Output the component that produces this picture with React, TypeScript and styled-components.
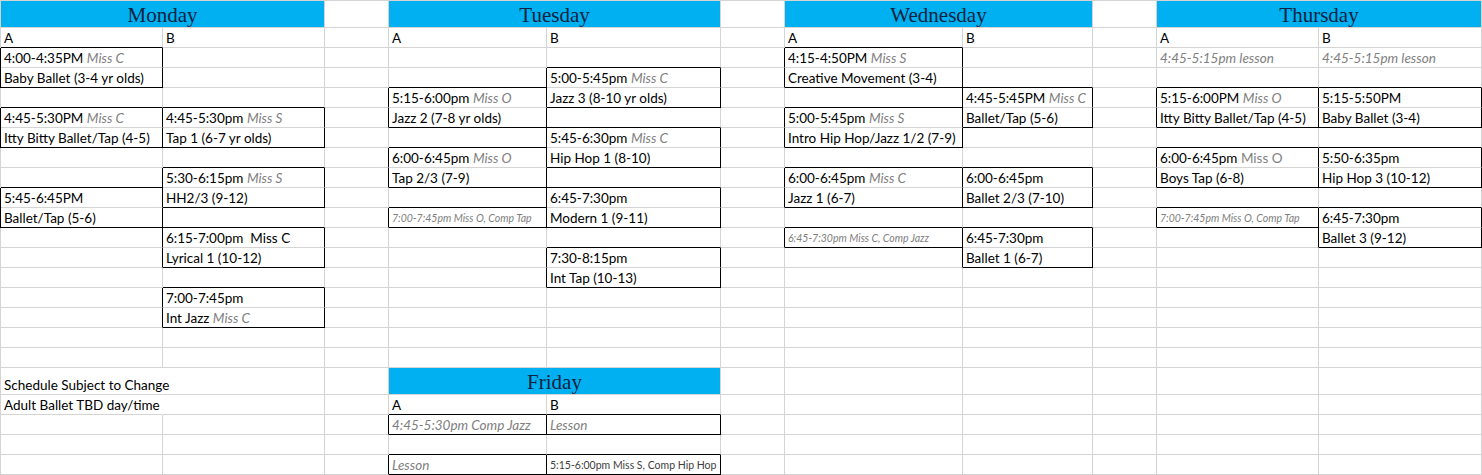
import React from 'react';
import styled, { createGlobalStyle } from 'styled-components';

const GRID = '#d4d4d4';
const INK = '#000';

const GlobalStyle = createGlobalStyle`
  *, *::before, *::after { box-sizing: border-box; }
  body {
    margin: 0;
    background: #fff;
    overflow: hidden;
  }
`;

const Sheet = styled.div`
  display: grid;
  grid-template-columns: 162px 162px 64px 158px 174px 64px 178px 130px 64px 162px 163px;
  grid-template-rows: 27px repeat(17, 20px) 27px repeat(4, 20px);
  width: 1482px;
  border-top: 1px solid ${GRID};
  border-left: 1px solid ${GRID};
  font-family: Lato, 'Liberation Sans', sans-serif;
  font-size: 13.5px;
  color: #000;
`;

const Cell = styled.div<{ $bottom?: boolean; $right?: boolean; $left?: boolean; $flow?: boolean }>`
  display: flex;
  align-items: flex-end;
  padding: 0 2px 0 3px;
  line-height: 17px;
  white-space: pre;
  min-width: 0;
  border-right: 1px solid ${({ $right, $flow }) => ($right ? INK : $flow ? 'transparent' : GRID)};
  border-bottom: 1px solid ${({ $bottom }) => ($bottom ? INK : GRID)};
  box-shadow: ${({ $left }) => ($left ? `-1px 0 0 ${INK}` : 'none')};
`;

const DayTitle = styled.div`
  grid-column: span 2;
  display: flex;
  align-items: flex-end;
  justify-content: center;
  background: #00b0f0;
  border-right: 1px solid ${GRID};
  border-bottom: 1px solid ${GRID};
  font-family: 'Liberation Serif', serif;
  font-size: 21px;
  line-height: 24px;
  color: #0c2240;
`;

const Teacher = styled.span<{ $plain?: boolean }>`
  color: #808080;
  font-style: ${({ $plain }) => ($plain ? 'normal' : 'italic')};
`;

const Lesson = styled.span`
  color: #808080;
  font-style: italic;
`;

const Note = styled.span<{ $plain?: boolean }>`
  font-size: 10.5px;
  color: ${({ $plain }) => ($plain ? '#404040' : '#808080')};
  font-style: ${({ $plain }) => ($plain ? 'normal' : 'italic')};
`;

const slot = (time: string, who: string) => (
  <>
    {time} <Teacher>{who}</Teacher>
  </>
);

const content: Record<string, React.ReactNode> = {
  // Monday
  '1,0': 'A',
  '1,1': 'B',
  '2,0': slot('4:00-4:35PM', 'Miss C'),
  '3,0': 'Baby Ballet (3-4 yr olds)',
  '5,0': slot('4:45-5:30PM', 'Miss C'),
  '5,1': slot('4:45-5:30pm', 'Miss S'),
  '6,0': 'Itty Bitty Ballet/Tap (4-5)',
  '6,1': 'Tap 1 (6-7 yr olds)',
  '8,1': slot('5:30-6:15pm', 'Miss S'),
  '9,0': '5:45-6:45PM',
  '9,1': 'HH2/3 (9-12)',
  '10,0': 'Ballet/Tap (5-6)',
  '11,1': '6:15-7:00pm  Miss C',
  '12,1': 'Lyrical 1 (10-12)',
  '14,1': '7:00-7:45pm',
  '15,1': (
    <>
      Int Jazz <Teacher>Miss C</Teacher>
    </>
  ),
  '18,0': 'Schedule Subject to Change',
  '19,0': 'Adult Ballet TBD day/time',
  // Tuesday
  '1,3': 'A',
  '1,4': 'B',
  '3,4': slot('5:00-5:45pm', 'Miss C'),
  '4,3': slot('5:15-6:00pm', 'Miss O'),
  '4,4': 'Jazz 3 (8-10 yr olds)',
  '5,3': 'Jazz 2 (7-8 yr olds)',
  '6,4': slot('5:45-6:30pm', 'Miss C'),
  '7,3': slot('6:00-6:45pm', 'Miss O'),
  '7,4': 'Hip Hop 1 (8-10)',
  '8,3': 'Tap 2/3 (7-9)',
  '9,4': '6:45-7:30pm',
  '10,3': <Note>7:00-7:45pm Miss O, Comp Tap</Note>,
  '10,4': 'Modern 1 (9-11)',
  '12,4': '7:30-8:15pm',
  '13,4': 'Int Tap (10-13)',
  // Wednesday
  '1,6': 'A',
  '1,7': 'B',
  '2,6': slot('4:15-4:50PM', 'Miss S'),
  '3,6': 'Creative Movement (3-4)',
  '4,7': slot('4:45-5:45PM', 'Miss C'),
  '5,6': slot('5:00-5:45pm', 'Miss S'),
  '5,7': 'Ballet/Tap (5-6)',
  '6,6': 'Intro Hip Hop/Jazz 1/2 (7-9)',
  '8,6': slot('6:00-6:45pm', 'Miss C'),
  '8,7': '6:00-6:45pm',
  '9,6': 'Jazz 1 (6-7)',
  '9,7': 'Ballet 2/3 (7-10)',
  '11,6': <Note>6:45-7:30pm Miss C, Comp Jazz</Note>,
  '11,7': '6:45-7:30pm',
  '12,7': 'Ballet 1 (6-7)',
  // Thursday
  '1,9': 'A',
  '1,10': 'B',
  '2,9': <Lesson>4:45-5:15pm lesson</Lesson>,
  '2,10': <Lesson>4:45-5:15pm lesson</Lesson>,
  '4,9': slot('5:15-6:00PM', 'Miss O'),
  '4,10': '5:15-5:50PM',
  '5,9': 'Itty Bitty Ballet/Tap (4-5)',
  '5,10': 'Baby Ballet (3-4)',
  '7,9': (
    <>
      6:00-6:45pm <Teacher $plain>Miss O</Teacher>
    </>
  ),
  '7,10': '5:50-6:35pm',
  '8,9': 'Boys Tap (6-8)',
  '8,10': 'Hip Hop 3 (10-12)',
  '10,9': <Note>7:00-7:45pm Miss O, Comp Tap</Note>,
  '10,10': '6:45-7:30pm',
  '11,10': 'Ballet 3 (9-12)',
  // Friday
  '19,3': 'A',
  '19,4': 'B',
  '20,3': <Lesson>4:45-5:30pm Comp Jazz</Lesson>,
  '20,4': <Lesson>Lesson</Lesson>,
  '22,3': <Lesson>Lesson</Lesson>,
  '22,4': <Note $plain>5:15-6:00pm Miss S, Comp Hip Hop</Note>,
};

// [row, col, height in rows]
const boxes: [number, number, number][] = [
  [2, 0, 2], [5, 0, 2], [5, 1, 2], [8, 1, 2], [9, 0, 2], [11, 1, 2], [14, 1, 2],
  [3, 4, 2], [4, 3, 2], [6, 4, 2], [7, 3, 2], [9, 4, 2], [10, 3, 1], [12, 4, 2],
  [2, 6, 2], [4, 7, 2], [5, 6, 2], [8, 6, 2], [8, 7, 2], [11, 6, 1], [11, 7, 2],
  [4, 9, 2], [4, 10, 2], [7, 9, 2], [7, 10, 2], [10, 9, 1], [10, 10, 2],
  [20, 3, 1], [20, 4, 1], [22, 3, 1], [22, 4, 1],
];

const headers: Record<string, string> = {
  '0,0': 'Monday',
  '0,3': 'Tuesday',
  '0,6': 'Wednesday',
  '0,9': 'Thursday',
  '18,3': 'Friday',
};

// text that spills over into the next empty cell
const spills = new Set(['18,0', '19,0']);

const ROWS = 23;
const COLS = 11;

const boxAt = (r: number, c: number) =>
  boxes.find(([br, bc, h]) => bc === c && r >= br && r < br + h);

const App = () => {
  const cells: React.ReactNode[] = [];
  for (let r = 0; r < ROWS; r++) {
    for (let c = 0; c < COLS; c++) {
      const key = `${r},${c}`;
      if (headers[key]) {
        cells.push(<DayTitle key={key}>{headers[key]}</DayTitle>);
        c++;
        continue;
      }
      const own = boxAt(r, c);
      const below = boxAt(r + 1, c);
      const bottom = (own && own[0] + own[2] - 1 === r) || (below && below[0] === r + 1);
      const right = !!own || !!boxAt(r, c + 1);
      cells.push(
        <Cell
          key={key}
          $bottom={!!bottom}
          $right={right}
          $left={c === 0 && !!own}
          $flow={spills.has(key)}
        >
          {content[key]}
        </Cell>,
      );
    }
  }

  return (
    <>
      <GlobalStyle />
      <Sheet>{cells}</Sheet>
    </>
  );
};

export default App;
